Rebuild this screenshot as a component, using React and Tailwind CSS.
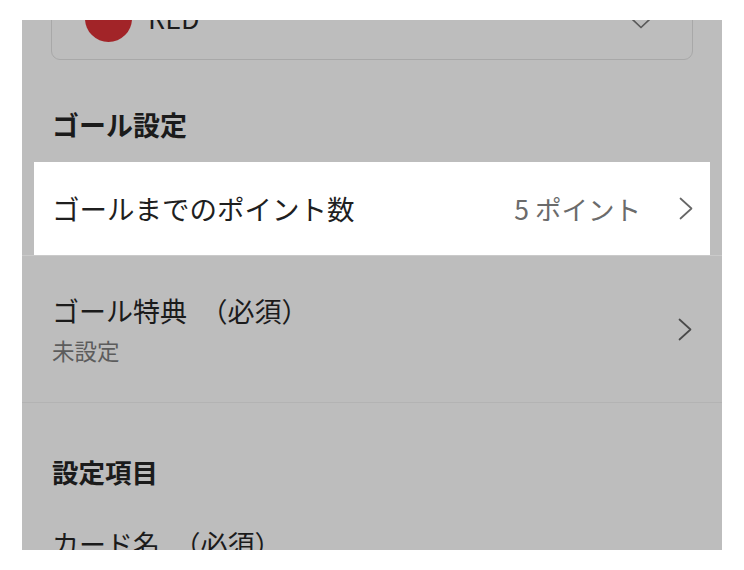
const font = { fontFamily: '"Noto Sans CJK JP", "Noto Sans", sans-serif' };

function ChevronRight({ className }) {
  return (
    <svg width="14" height="23" viewBox="0 0 14 23" fill="none" className={className}>
      <polyline points="1.5,1.5 12.5,11.5 1.5,21.5" stroke="currentColor" strokeWidth="1.7" strokeLinecap="round" strokeLinejoin="round" />
    </svg>
  );
}

function ChevronDown({ className }) {
  return (
    <svg width="22" height="12" viewBox="0 0 22 12" fill="none" className={className}>
      <polyline points="1.5,1.5 11,10.5 20.5,1.5" stroke="currentColor" strokeWidth="1.7" strokeLinecap="round" strokeLinejoin="round" />
    </svg>
  );
}

export default function App() {
  return (
    <div className="w-[744px] h-[570px] bg-white pt-[20px] pl-[22px]" style={font}>
      <div className="w-[700px] h-[530px] overflow-hidden bg-[#bdbdbd] text-[#1b1b1b]">
        {/* Colour select */}
        <div className="-mt-[43px] mx-[29px] h-[83px] rounded-[9px] border-[1.5px] border-[#a8a8a8] flex items-center pl-[33px] pr-[40px]">
          <div className="w-[47px] h-[47px] rounded-full bg-[#a22428] shrink-0" />
          <span className="ml-[16px] text-[27px] leading-none -mt-[3px] flex-1">RED</span>
          <ChevronDown className="text-[#5a5a5a] mt-[8px]" />
        </div>

        {/* ゴール設定 */}
        <div className="pt-[45px] pb-[16px] px-[30px]">
          <h2 className="text-[27px] leading-[39px] font-bold">ゴール設定</h2>
        </div>

        <div className="pt-[2px] px-[12px] border-b border-[#cacaca]">
          <div className="h-[93px] bg-white flex items-center pl-[18px] pr-[17px]">
            <span className="text-[27.5px] text-[#1f1f1f] flex-1">ゴールまでのポイント数</span>
            <span className="text-[26.5px] text-[#6b6b6b]">5 ポイント</span>
            <ChevronRight className="ml-[38px] text-[#666666]" />
          </div>
        </div>

        <div className="py-[37px] px-[30px] flex items-center border-b border-[#b3b3b3]">
          <div className="flex-1">
            <div className="text-[27px] leading-[36px]">ゴール特典　（必須）</div>
            <div className="mt-[6px] text-[22.5px] leading-[30px] text-[#5c5c5c]">未設定</div>
          </div>
          <ChevronRight className="text-[#4a4a4a]" />
        </div>

        {/* 設定項目 */}
        <div className="pt-[49px] px-[30px]">
          <h2 className="text-[26.5px] leading-[39px] font-bold">設定項目</h2>
        </div>
        <div className="pt-[35px] px-[30px]">
          <div className="text-[27px] leading-[36px]">カード名　（必須）</div>
        </div>
      </div>
    </div>
  );
}
